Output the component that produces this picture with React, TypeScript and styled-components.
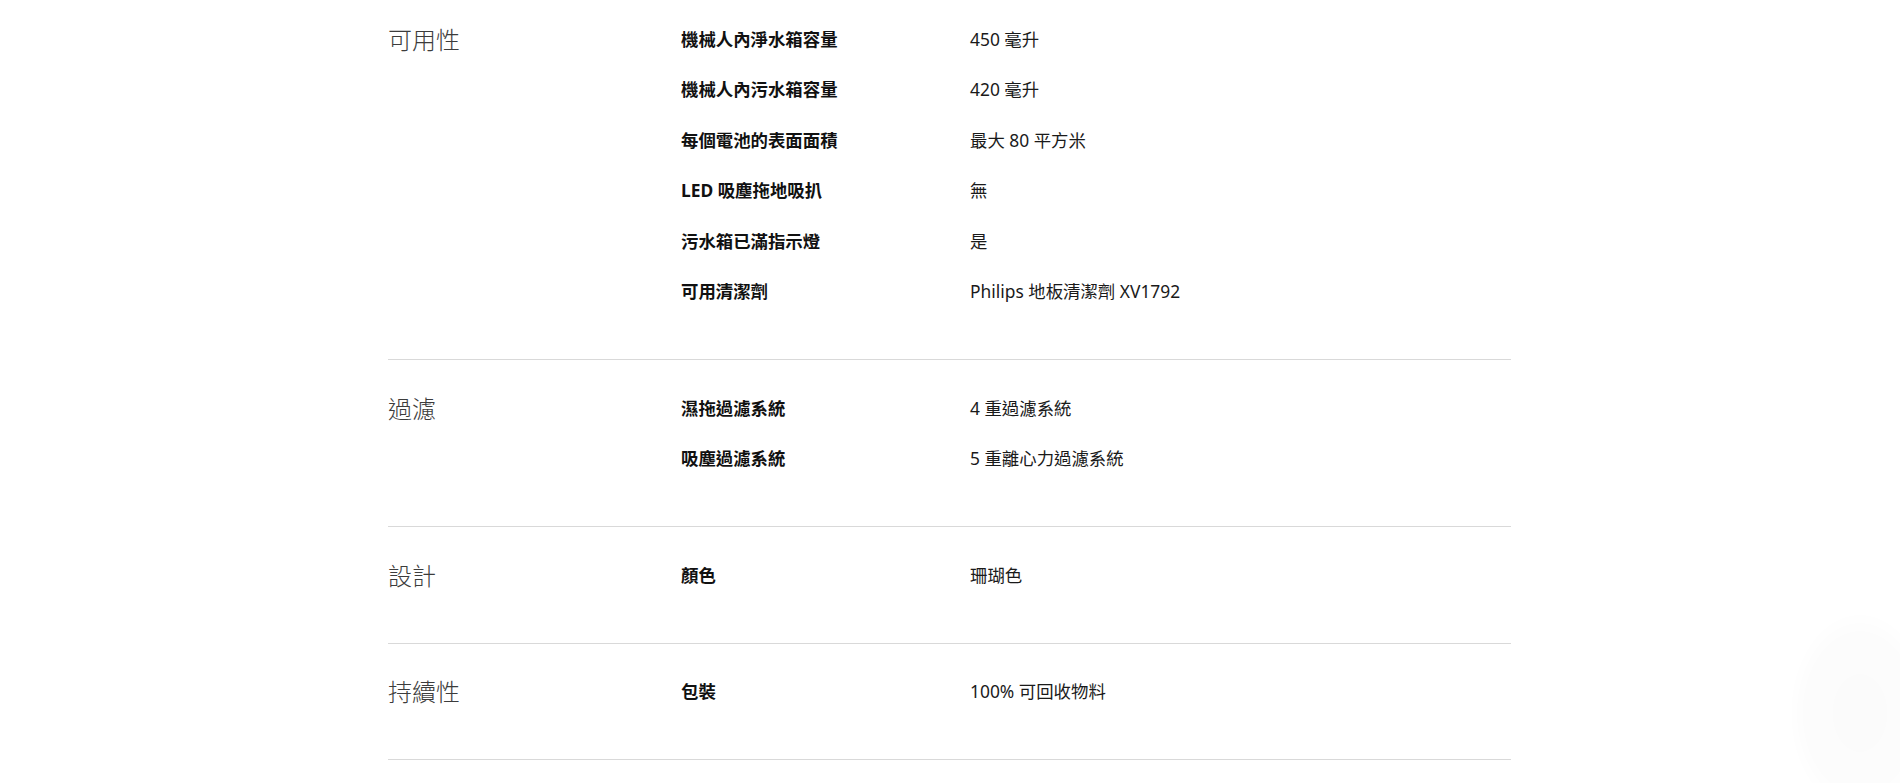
import React from "react";
import styled, { createGlobalStyle } from "styled-components";

const Global = createGlobalStyle`
  html, body {
    margin: 0;
    padding: 0;
    background: #ffffff;
    overflow: hidden;
  }
  body {
    font-family: "Noto Sans", "Noto Sans CJK TC", sans-serif;
    color: #111111;
  }
`;

const Page = styled.div`
  width: 1123px;
  margin: 0 auto 0 388px;
`;

const Section = styled.section<{ $first?: boolean }>`
  display: grid;
  grid-template-columns: 293px 1fr;
  padding: ${(p) => (p.$first ? "13px" : "22px")} 0 43px;
  border-bottom: 1px solid #d9d9d9;
`;

const Category = styled.h3`
  margin: 0;
  height: 50.5px;
  display: flex;
  align-items: center;
  font-family: "Noto Sans CJK TC", "Noto Sans", sans-serif;
  font-size: 24px;
  font-weight: 300;
  color: #3c3c3c;
`;

const Rows = styled.dl`
  margin: 0;
  display: flex;
  flex-direction: column;
`;

const Row = styled.div`
  display: grid;
  grid-template-columns: 289px 1fr;
  height: 50.5px;
  align-items: center;
`;

const Label = styled.dt`
  margin: 0;
  font-family: "Noto Sans", "Noto Sans CJK TC", sans-serif;
  font-weight: 700;
  font-size: 17.4px;
  color: #111111;
`;

const Value = styled.dd`
  margin: 0;
  font-family: "Noto Sans", "Noto Sans CJK TC", sans-serif;
  font-weight: 400;
  font-size: 17.4px;
  color: #1a1a1a;
`;

const Glow = styled.div`
  position: fixed;
  right: -30px;
  bottom: -30px;
  width: 140px;
  height: 200px;
  border-radius: 50%;
  background: radial-gradient(ellipse at center, rgba(0, 0, 0, 0.014) 0%, rgba(0, 0, 0, 0.01) 55%, rgba(0, 0, 0, 0) 72%);
  pointer-events: none;
`;

type Spec = { category: string; rows: [string, string][] };

const specs: Spec[] = [
  {
    category: "可用性",
    rows: [
      ["機械人內淨水箱容量", "450 毫升"],
      ["機械人內污水箱容量", "420 毫升"],
      ["每個電池的表面面積", "最大 80 平方米"],
      ["LED 吸塵拖地吸扒", "無"],
      ["污水箱已滿指示燈", "是"],
      ["可用清潔劑", "Philips 地板清潔劑 XV1792"],
    ],
  },
  {
    category: "過濾",
    rows: [
      ["濕拖過濾系統", "4 重過濾系統"],
      ["吸塵過濾系統", "5 重離心力過濾系統"],
    ],
  },
  {
    category: "設計",
    rows: [["顏色", "珊瑚色"]],
  },
  {
    category: "持續性",
    rows: [["包裝", "100% 可回收物料"]],
  },
];

export default function App() {
  return (
    <>
      <Global />
      <Page>
        {specs.map((s, i) => (
          <Section key={s.category} $first={i === 0}>
            <Category>{s.category}</Category>
            <Rows>
              {s.rows.map(([l, v]) => (
                <Row key={l}>
                  <Label>{l}</Label>
                  <Value>{v}</Value>
                </Row>
              ))}
            </Rows>
          </Section>
        ))}
      </Page>
      <Glow />
    </>
  );
}
